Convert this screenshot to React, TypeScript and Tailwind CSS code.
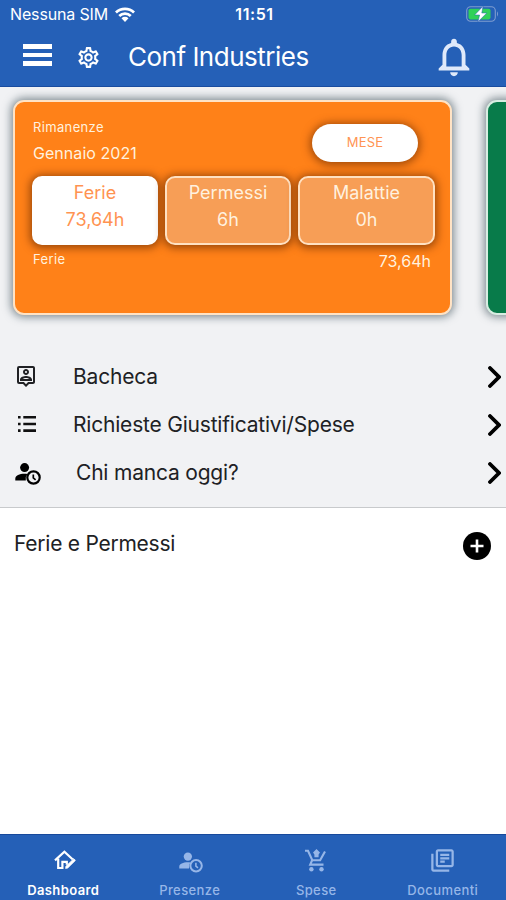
import type { ReactNode } from "react";
import { MdNotificationsNone, MdOutlineSettings, MdOutlinePersonPin, MdOutlineLibraryBooks } from "react-icons/md";

function WifiIcon() {
  return (
    <svg viewBox="0 0 20 15" className="w-5 h-[15px]" fill="currentColor">
      <path d="M0 4.6a14.3 14.3 0 0 1 20 0l-1.9 2a11.6 11.6 0 0 0-16.2 0z" />
      <path d="M3.3 8a9.6 9.6 0 0 1 13.4 0l-1.9 2a7 7 0 0 0-9.6 0z" />
      <path d="M6.5 11.3a5 5 0 0 1 7 0L10 15z" />
    </svg>
  );
}

function BatteryIcon() {
  return (
    <svg viewBox="0 0 33 16" className="w-[33px] h-4">
      <rect x="0.7" y="0.7" width="28.6" height="14.6" rx="4" fill="none" stroke="#7f9dd0" strokeWidth="1.1" />
      <path d="M31 5.3q2 2.7 0 5.4z" fill="#7f9dd0" />
      <rect x="2.5" y="2.8" width="22" height="10.6" rx="1.8" fill="#30d158" />
      <path d="M17 0.3 8.6 9h5L12 15.8 20.8 7h-5z" fill="white" stroke="#2560b7" strokeWidth="0.5" />
    </svg>
  );
}

function ListIcon() {
  return (
    <svg viewBox="0 0 18 18" className="w-[18px] h-[18px] ml-[3px]" fill="#111">
      <path d="M0 1h2.6v2.6H0zM0 7.7h2.6v2.6H0zM0 14.3h2.6v2.6H0zM5.3 1H18v2.6H5.3zM5.3 7.7H18v2.6H5.3zM5.3 14.3H18v2.6H5.3z" />
    </svg>
  );
}

function PersonClockIcon({ className }: { className: string }) {
  return (
    <svg viewBox="0 0 26 22" className={className} fill="currentColor">
      <circle cx="9.6" cy="4.6" r="4.5" />
      <path d="M0.3 17.6v-2.2c0-3 4.2-4.7 9.2-4.7 1 0 1.9.1 2.8.2a8 8 0 0 0-1.5 6.7z" />
      <path
        fillRule="evenodd"
        d="M18.5 7.2a7.3 7.3 0 1 0 0 14.6 7.3 7.3 0 0 0 0-14.6zm0 2.2a5.1 5.1 0 1 1 0 10.2 5.1 5.1 0 0 1 0-10.2z"
      />
      <path d="M18.3 11.4v3.5l2.3 1.9" fill="none" stroke="currentColor" strokeWidth="1.7" />
    </svg>
  );
}

function HomeEditIcon() {
  return (
    <svg viewBox="0 0 22 20" className="w-[22px] h-5 ml-[3px]" fill="none" stroke="currentColor" strokeWidth="2.2">
      <path d="M1 10.4 10.4 1.8l8.4 7.7" />
      <path d="M4.2 8.6V18h4.2v-6.2h4.4v3" />
      <path d="m11.6 18.4.4-2.2 7.8-7.5 1.6 1.7-7.7 7.6z" fill="currentColor" strokeWidth="0.8" />
    </svg>
  );
}

function CartIcon() {
  return (
    <svg viewBox="0 0 22 23" className="w-[22px] h-[23px]" fill="none" stroke="currentColor" strokeWidth="2.1">
      <path d="M0 1.8h3l4.3 9.4h7.8l4.9-8.8" />
      <path d="M7.2 11 5.2 15.6h13.3" />
      <path d="M11.5 0 15 3.4 13.6 5.4v2.8H9.4V5.4L8 3.4z" fill="currentColor" stroke="none" />
      <circle cx="6.4" cy="20.3" r="2.2" fill="currentColor" stroke="none" />
      <circle cx="16.5" cy="20.3" r="2.2" fill="currentColor" stroke="none" />
    </svg>
  );
}

function Header() {
  return (
    <header className="h-[87px] bg-[#2560b7] border-b border-[#194c9f] text-white">
      <div className="grid grid-cols-3 items-center h-7 pl-[10px] pr-[7px] text-[16px]">
        <div className="flex items-center gap-[7px] whitespace-nowrap tracking-[-0.15px]">
          Nessuna SIM <WifiIcon />
        </div>
        <span className="text-center font-semibold tracking-[0.6px]">11:51</span>
        <div className="flex justify-end"><BatteryIcon /></div>
      </div>
      <div className="flex items-center h-[58px] pl-[23px] pr-[29px]">
        <div className="flex flex-col gap-1 w-[29px] -mt-1">
          <div className="h-[4.5px] bg-white" />
          <div className="h-[4.5px] bg-white" />
          <div className="h-[4.5px] bg-white" />
        </div>
        <MdOutlineSettings className="w-[25px] h-[25px] ml-6" />
        <h1 className="ml-[27px] text-[26px] leading-8 tracking-[-0.5px] font-normal">Conf Industries</h1>
        <MdNotificationsNone className="w-[46px] h-[46px] ml-auto text-[#dfe9fa]" />
      </div>
    </header>
  );
}

const balances = [
  { label: "Ferie", value: "73,64h", active: true },
  { label: "Permessi", value: "6h", active: false },
  { label: "Malattie", value: "0h", active: false },
];

function BalanceCard() {
  return (
    <div className="w-[439px] h-[215px] shrink-0 rounded-[11px] border-2 border-[#ffe3c5] bg-[#ff8118] shadow-[0_0_9px_2px_rgba(50,70,80,0.6)] px-[18px] pt-[15px] text-[#fff1df]">
      <div className="flex justify-between h-[59px]">
        <div>
          <p className="text-[13px] leading-5 tracking-[0.35px]">Rimanenze</p>
          <p className="mt-[2px] text-[16px] leading-7 tracking-[0.05px]">Gennaio 2021</p>
        </div>
        <button className="w-[106px] h-[38px] mt-[7px] mr-[14px] rounded-full bg-white text-[#ff9453] text-[13px] tracking-[0.2px] shadow-[0_1px_8px_2px_rgba(110,45,0,0.65)]">
          MESE
        </button>
      </div>
      <div className="grid grid-cols-[126px_126px_137px] gap-[7px] -ml-px">
        {balances.map((b) => (
          <div
            key={b.label}
            className={`h-[69px] rounded-[10px] border-2 pt-px text-center text-[18px] leading-[27px] shadow-[0_1px_8px_2px_rgba(100,40,0,0.65)] ${
              b.active ? "bg-white border-white text-[#ff9351]" : "bg-[#f79e56] border-[#ffe1c2]"
            }`}
          >
            <p>{b.label}</p>
            <p>{b.value}</p>
          </div>
        ))}
      </div>
      <div className="flex justify-between mt-1 pr-px">
        <span className="text-[13px] leading-5 tracking-[0.4px]">Ferie</span>
        <span className="text-[16px] leading-6">73,64h</span>
      </div>
    </div>
  );
}

function MenuRow({ icon, label, indent }: { icon: ReactNode; label: string; indent?: boolean }) {
  return (
    <div className="flex items-center h-12 pl-[15px] pr-[5px]">
      <div className="w-[27px] flex">{icon}</div>
      <span className={`mt-[2px] text-[21px] leading-7 tracking-[-0.2px] ${indent ? "ml-[34px]" : "ml-[31px]"}`}>{label}</span>
      <svg viewBox="0 0 13 22" className="w-[13px] h-[22px] ml-auto mt-px" fill="none" stroke="black" strokeWidth="3.8" strokeLinecap="round">
        <path d="m2 2 9 9-9 9" />
      </svg>
    </div>
  );
}

const tabs = [
  { label: "Dashboard", icon: <HomeEditIcon />, active: true },
  { label: "Presenze", icon: <PersonClockIcon className="w-6 h-[21px] mt-1 ml-[2px]" />, active: false },
  { label: "Spese", icon: <CartIcon />, active: false },
  { label: "Documenti", icon: <MdOutlineLibraryBooks className="w-[27px] h-[27px]" />, active: false },
];

export default function App() {
  return (
    <div className="flex flex-col h-[900px] w-full overflow-hidden bg-white font-['Inter',sans-serif] text-[#202124]">
      <Header />
      <main className="flex-1">
        <section className="h-[421px] bg-[#f1f2f4] border-b border-[#c8cacc]">
          <div className="flex gap-[34px] h-[265px] overflow-hidden pt-[13px] pl-[13px]">
            <BalanceCard />
            <div className="w-[439px] h-[215px] shrink-0 rounded-[11px] border-2 border-[#d8ede2] bg-[#087b4a] shadow-[0_0_9px_2px_rgba(50,70,80,0.6)]" />
          </div>
          <MenuRow icon={<MdOutlinePersonPin className="w-6 h-6 ml-[-1px]" />} label="Bacheca" />
          <MenuRow icon={<ListIcon />} label="Richieste Giustificativi/Spese" />
          <MenuRow icon={<PersonClockIcon className="w-[26px] h-[22px] mt-[3px] text-black" />} label="Chi manca oggi?" indent />
        </section>
        <div className="flex items-center justify-between h-[76px] pl-[14px] pr-[15px]">
          <h2 className="text-[21px] tracking-[-0.25px] -mt-1">Ferie e Permessi</h2>
          <svg viewBox="0 0 28 28" className="w-7 h-7">
            <circle cx="14" cy="14" r="14" fill="black" />
            <path d="M14 7.5v13M7.5 14h13" stroke="white" strokeWidth="2.6" />
          </svg>
        </div>
      </main>
      <nav className="grid grid-cols-4 h-[66px] bg-[#2560b7] border-t border-[#17499b]">
        {tabs.map((t) => (
          <div key={t.label} className={`flex flex-col items-center pt-[11px] ${t.active ? "text-white" : "text-[#96b6e8]"}`}>
            <div className="h-7 flex items-center">{t.icon}</div>
            <span className={`mt-[6px] text-[13px] leading-5 tracking-[0.4px] ${t.active ? "font-semibold" : "font-medium"}`}>
              {t.label}
            </span>
          </div>
        ))}
      </nav>
    </div>
  );
}
